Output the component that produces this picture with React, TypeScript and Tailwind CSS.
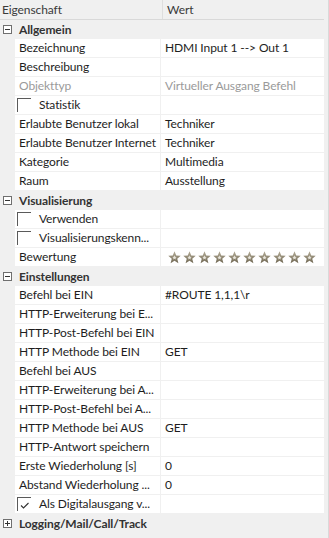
import React from "react";

type Row =
    | { kind: "group"; label: string; open: boolean }
    | { kind: "prop"; label: string; value?: string; muted?: boolean; check?: boolean; checked?: boolean; stars?: boolean };

const rows: Row[] = [
    { kind: "group", label: "Allgemein", open: true },
    { kind: "prop", label: "Bezeichnung", value: "HDMI Input 1 --> Out 1" },
    { kind: "prop", label: "Beschreibung" },
    { kind: "prop", label: "Objekttyp", value: "Virtueller Ausgang Befehl", muted: true },
    { kind: "prop", label: "Statistik", check: true },
    { kind: "prop", label: "Erlaubte Benutzer lokal", value: "Techniker" },
    { kind: "prop", label: "Erlaubte Benutzer Internet", value: "Techniker" },
    { kind: "prop", label: "Kategorie", value: "Multimedia" },
    { kind: "prop", label: "Raum", value: "Ausstellung" },
    { kind: "group", label: "Visualisierung", open: true },
    { kind: "prop", label: "Verwenden", check: true },
    { kind: "prop", label: "Visualisierungskenn...", check: true },
    { kind: "prop", label: "Bewertung", stars: true },
    { kind: "group", label: "Einstellungen", open: true },
    { kind: "prop", label: "Befehl bei EIN", value: "#ROUTE 1,1,1\\r" },
    { kind: "prop", label: "HTTP-Erweiterung bei E..." },
    { kind: "prop", label: "HTTP-Post-Befehl bei EIN" },
    { kind: "prop", label: "HTTP Methode bei EIN", value: "GET" },
    { kind: "prop", label: "Befehl bei AUS" },
    { kind: "prop", label: "HTTP-Erweiterung bei A..." },
    { kind: "prop", label: "HTTP-Post-Befehl bei A..." },
    { kind: "prop", label: "HTTP Methode bei AUS", value: "GET" },
    { kind: "prop", label: "HTTP-Antwort speichern" },
    { kind: "prop", label: "Erste Wiederholung [s]", value: "0" },
    { kind: "prop", label: "Abstand Wiederholung ...", value: "0" },
    { kind: "prop", label: "Als Digitalausgang v...", check: true, checked: true },
    { kind: "group", label: "Logging/Mail/Call/Track", open: false },
];

function ToggleBox({ open }: { open: boolean }) {
    return (
        <svg width="9" height="9" viewBox="0 0 9 9" className="block">
            <rect x="0.5" y="0.5" width="8" height="8" fill="#fff" stroke="#6f6f6f" />
            <line x1="2" y1="4.5" x2="7" y2="4.5" stroke="#333" />
            {!open && <line x1="4.5" y1="2" x2="4.5" y2="7" stroke="#333" />}
        </svg>
    );
}

function Star() {
    return (
        <svg width="13" height="13" viewBox="0 0 24 24" className="block">
            <defs>
                <linearGradient id="sg" x1="0" y1="0" x2="0" y2="1">
                    <stop offset="0" stopColor="#b3ab96" />
                    <stop offset="1" stopColor="#6f6753" />
                </linearGradient>
            </defs>
            <polygon
                points="12,0.5 15.2,8.4 23.5,8.9 17.1,14.3 19.2,22.8 12,18.2 4.8,22.8 6.9,14.3 0.5,8.9 8.8,8.4"
                fill="url(#sg)"
            />
            <polygon
                points="12,8 13.1,10.7 16,10.9 13.8,12.8 14.5,15.7 12,14.1 9.5,15.7 10.2,12.8 8,10.9 10.9,10.7"
                fill="#e9e6dc"
            />
        </svg>
    );
}

function CheckBox({ checked }: { checked?: boolean }) {
    return (
        <div className="w-[14px] h-[14px] border-t border-l border-[#5a5a5a] relative shrink-0">
            {checked && (
                <svg width="10" height="8" viewBox="0 0 10 8" className="absolute left-[2px] top-[4px]">
                    <polyline points="1,3.5 3.5,6 8.5,1" fill="none" stroke="#333" strokeWidth="1.1" />
                </svg>
            )}
        </div>
    );
}

export default function App() {
    return (
        <div
            className="w-[329px] h-[538px] bg-[#f0f0f0] border-r border-[#d9d9d9] overflow-hidden text-[12px] tracking-[-0.1px] leading-none text-[#1e1e1e]"
            style={{ fontFamily: 'Lato, "Liberation Sans", sans-serif' }}
        >
            {/* Kopfzeile */}
            <div className="flex w-[324px] h-[20px] border-b border-[#d9d9d9]">
                <div className="w-[163px] border-r border-[#dedede] pl-[2px] flex items-center text-[#3a3a3a]">Eigenschaft</div>
                <div className="flex-1 pl-[4px] flex items-center text-[#3a3a3a]">Wert</div>
            </div>

            <div className="w-[324px]">
                {rows.map((r, i) =>
                    r.kind === "group" ? (
                        <div key={i} className="h-[19px] flex items-center">
                            <div className="w-[19px] pl-[3px]">
                                <ToggleBox open={r.open} />
                            </div>
                            <span className="font-bold text-[#333]">{r.label}</span>
                        </div>
                    ) : (
                        <div key={i} className="h-[19px] flex pl-[15px]">
                            <div className="w-[145px] h-[18px] bg-white flex items-center whitespace-nowrap overflow-hidden">
                                {r.check ? (
                                    <div className="flex items-center pl-[2px] gap-[8px]">
                                        <CheckBox checked={r.checked} />
                                        <span>{r.label}</span>
                                    </div>
                                ) : (
                                    <span className={`pl-[4px] ${r.muted ? "text-[#9a9a9a]" : ""}`}>{r.label}</span>
                                )}
                            </div>
                            <div className="ml-[1px] flex-1 h-[18px] bg-white flex items-center whitespace-nowrap overflow-hidden">
                                {r.stars ? (
                                    <div className="flex gap-[2px] pl-[7px]">
                                        {Array.from({ length: 10 }).map((_, k) => (
                                            <Star key={k} />
                                        ))}
                                    </div>
                                ) : (
                                    <span className={`pl-[4px] ${r.muted ? "text-[#9a9a9a]" : ""}`}>{r.value ?? ""}</span>
                                )}
                            </div>
                        </div>
                    )
                )}
            </div>
        </div>
    );
}
